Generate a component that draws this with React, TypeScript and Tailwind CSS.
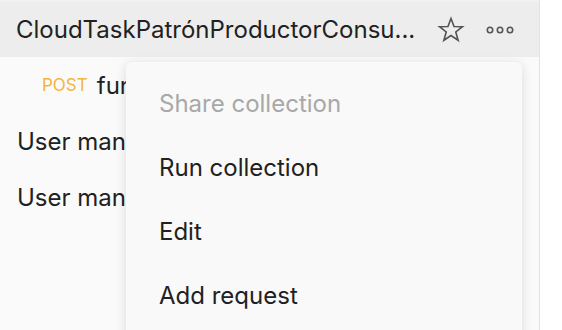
import React from 'react';

const font = { fontFamily: 'Inter, "Noto Sans", sans-serif' };

const StarIcon = () => (
  <svg width="28" height="28" viewBox="0 0 24 24" fill="none" stroke="#555" strokeWidth="1.4" strokeLinejoin="miter">
    <polygon points="12,2.2 14.6,9 21.8,9.2 16.1,13.7 18.1,20.8 12,16.7 5.9,20.8 7.9,13.7 2.2,9.2 9.4,9" />
  </svg>
);

const DotsIcon = () => (
  <svg width="30" height="10" viewBox="0 0 30 10" fill="none" stroke="#555" strokeWidth="1.6">
    <circle cx="5" cy="5" r="2.7" />
    <circle cx="15" cy="5" r="2.7" />
    <circle cx="25" cy="5" r="2.7" />
  </svg>
);

const menuItems = [
  { label: 'Share collection', disabled: true },
  { label: 'Run collection' },
  { label: 'Edit' },
  { label: 'Add request' },
];

export default function App() {
  return (
    <div className="w-[562px] h-[330px] bg-white overflow-hidden flex" style={font}>
      <div className="relative w-[540px] h-full bg-[#fafafa] border-r border-[#e3e3e3] flex flex-col">
        <div className="h-[57px] bg-[#ededed] border-t-2 border-[#f1f1f1] flex items-center pl-4 pr-[24px] shrink-0">
          <span className="flex-1 text-[24px] text-[#212121] whitespace-nowrap overflow-hidden">
            CloudTaskPatrónProductorConsu...
          </span>
          <div className="flex items-center gap-[20px] ml-3">
            <StarIcon />
            <DotsIcon />
          </div>
        </div>

        {/* rows are cut off where the open menu covers them */}
        <div className="w-[126px] overflow-hidden whitespace-nowrap">
          <div className="h-[57px] flex items-center pl-[42px] gap-[9px]">
            <span className="text-[17px] text-[#f5b440]">POST</span>
            <span className="text-[24px] text-[#212121]">functionTest</span>
          </div>
          <div className="h-[56px] flex items-center pl-[17px]">
            <span className="text-[24px] text-[#212121]">User management</span>
          </div>
          <div className="h-[56px] flex items-center pl-[17px]">
            <span className="text-[24px] text-[#212121]">User management</span>
          </div>
        </div>

        <div className="absolute left-[126px] top-[62px] w-[396px] h-[300px] bg-[#f9f9f9] rounded-[6px] shadow-[0_2px_12px_rgba(0,0,0,0.13)] pt-[10px]">
          {menuItems.map((item) => (
            <div
              key={item.label}
              className={`h-[64px] flex items-center pl-[33px] text-[24px] ${
                item.disabled ? 'text-[#a8a8a8]' : 'text-[#212121]'
              }`}
            >
              {item.label}
            </div>
          ))}
        </div>
      </div>
    </div>
  );
}
